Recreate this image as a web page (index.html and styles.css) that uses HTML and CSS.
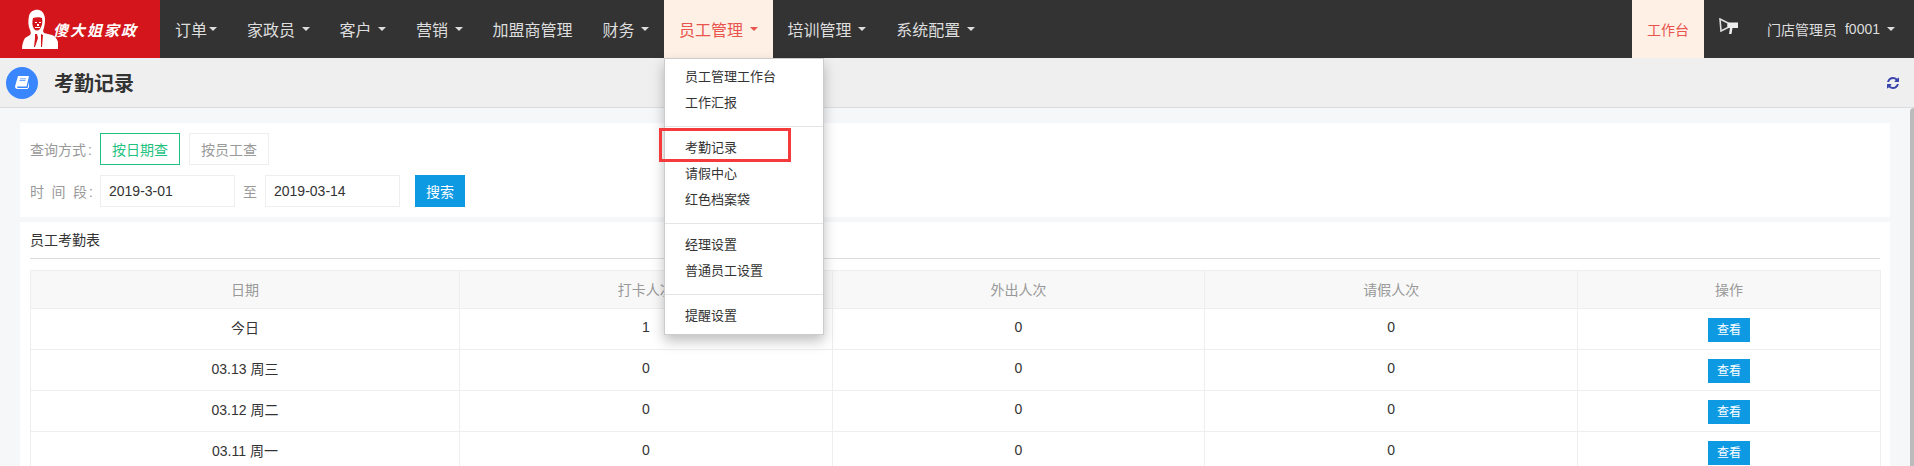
FILE: index.html
```html
<!DOCTYPE html>
<html lang="en">

<head>
    <meta charset="UTF-8">
    <meta name="viewport" content="width=device-width, initial-scale=1.0">
    <title>考勤记录</title>
    <link rel="stylesheet" href="styles.css">
</head>

<body>
    <header class="topbar">
        <a class="logo">
            <svg class="logo-figure" viewBox="0 0 36 40" width="36" height="40">
                <path fill="#fff" d="M7 7C8 2 13 0 17 1c4 1 6 5 6 10 0 4-1 8-2 11l1 2 8 2c3 1 5 4 6 7v7H0c0-4 1-8 3-11l5-3c1-1 1-3 0-5C6 17 6 12 7 7z"/>
                <path fill="#d4161c" d="M11 9c3-1 7-1 9 0 1 4 0 8-2 11-2 2-4 2-6 0-2-3-2-7-1-11z"/>
                <path fill="#fff" d="M13 13h2v1h-2zM17 13h2v1h-2zM15 15h2v2h-2zM13 18h5v1h-5z"/>
                <path fill="#d4161c" d="M13 25l2 0 1 4-3 9h-1l1-9zM19 25l2 1-1 12h-1z"/>
            </svg>
            <span class="logo-text">傻大姐家政</span>
        </a>
        <nav class="main-nav">
            <a class="nav-item nav-item-tight">订单<i class="caret"></i></a>
            <a class="nav-item">家政员<i class="caret"></i></a>
            <a class="nav-item">客户<i class="caret"></i></a>
            <a class="nav-item">营销<i class="caret"></i></a>
            <a class="nav-item">加盟商管理</a>
            <a class="nav-item">财务<i class="caret"></i></a>
            <div class="nav-item active">员工管理<i class="caret"></i>
                <ul class="dropdown">
                    <li>员工管理工作台</li>
                    <li>工作汇报</li>
                    <li class="divider"></li>
                    <li>考勤记录</li>
                    <li>请假中心</li>
                    <li>红色档案袋</li>
                    <li class="divider"></li>
                    <li>经理设置</li>
                    <li>普通员工设置</li>
                    <li class="divider"></li>
                    <li>提醒设置</li>
                    <span class="highlight"></span>
                </ul>
            </div>
            <a class="nav-item">培训管理<i class="caret"></i></a>
            <a class="nav-item">系统配置<i class="caret"></i></a>
        </nav>
        <div class="user-nav">
            <a class="nav-item active nav-small">工作台</a>
            <svg class="horn" viewBox="0 0 19 16" width="19" height="16">
                <path fill="none" stroke="#ddd" stroke-width="1.600" d="M1 1l8 4v4.500l-7 3.500z"/>
                <path fill="#eee" d="M9 4.500h10v5.500h-5.500l-1 6H10l1-6H9z"/>
            </svg>
            <a class="user-name">门店管理员<span class="user-id">f0001</span><i class="caret"></i></a>
        </div>
    </header>

    <div class="title-bar">
        <span class="title-icon">
            <svg viewBox="0 0 14 13" width="14" height="13">
                <path fill="#fff" d="M3 0h11l-2.500 10.500H3c-.8 0-1 .3-.9.800.1.300.5.600 1 .600h9.400L14 6v5l-1.300 2H2.500C1 13 .2 12 0 10.500z"/>
                <path fill="#3a86ff" d="M5 2.500h6l-.2.800H4.800zM4.600 4.300h6l-.2.800H4.400z"/>
            </svg>
        </span>
        <h1>考勤记录</h1>
        <svg class="refresh" viewBox="0 0 1792 1792" width="14" height="14">
            <path fill="#3a44ad" d="M1639 1056q0 5-1 7-64 268-268 434.500t-478 166.500q-146 0-282.500-55t-243.500-157l-129 129q-19 19-45 19t-45-19-19-45v-448q0-26 19-45t45-19h448q26 0 45 19t19 45-19 45l-137 137q71 66 161 102t187 36q134 0 250-65t186-179q11-17 53-117 8-23 30-23h192q13 0 22.500 9.500t9.500 22.500zm25-800v448q0 26-19 45t-45 19h-448q-26 0-45-19t-19-45 19-45l138-138q-148-137-349-137-134 0-250 65t-186 179q-11 17-53 117-8 23-30 23h-199q-13 0-22.500-9.500t-9.500-22.500v-7q65-268 270-434.500t480-166.500q146 0 284 55.500t245 156.500l130-129q19-19 45-19t45 19 19 45z"/>
        </svg>
    </div>

    <main class="content">
        <section class="card search-card">
            <div class="search-row">
                <label class="search-label">查询方式<span class="colon">:</span></label>
                <button class="tab tab-on">按日期查</button>
                <button class="tab">按员工查</button>
            </div>
            <div class="search-row">
                <label class="search-label"><span class="spaced">时间</span>段<span class="colon">:</span></label>
                <input class="date-input" type="text" value="2019-3-01">
                <span class="to">至</span>
                <input class="date-input" type="text" value="2019-03-14">
                <button class="btn-search">搜索</button>
            </div>
        </section>

        <section class="card table-card">
            <h2 class="table-title">员工考勤表</h2>
            <table class="record-table">
                <colgroup>
                    <col class="col-date">
                    <col class="col-num">
                    <col class="col-num">
                    <col class="col-num">
                    <col class="col-op">
                </colgroup>
                <thead>
                    <tr>
                        <th>日期</th>
                        <th>打卡人次</th>
                        <th>外出人次</th>
                        <th>请假人次</th>
                        <th>操作</th>
                    </tr>
                </thead>
                <tbody>
                    <tr>
                        <td>今日</td>
                        <td>1</td>
                        <td>0</td>
                        <td>0</td>
                        <td><a class="btn-view">查看</a></td>
                    </tr>
                    <tr>
                        <td>03.13 周三</td>
                        <td>0</td>
                        <td>0</td>
                        <td>0</td>
                        <td><a class="btn-view">查看</a></td>
                    </tr>
                    <tr>
                        <td>03.12 周二</td>
                        <td>0</td>
                        <td>0</td>
                        <td>0</td>
                        <td><a class="btn-view">查看</a></td>
                    </tr>
                    <tr>
                        <td>03.11 周一</td>
                        <td>0</td>
                        <td>0</td>
                        <td>0</td>
                        <td><a class="btn-view">查看</a></td>
                    </tr>
                </tbody>
            </table>
        </section>
    </main>

    <div class="scroll-thumb"></div>
</body>

</html>
```

FILE: styles.css
```css
* {
    box-sizing: border-box;
}

html, body {
    height: 466px;
    overflow: hidden;
}

body {
    margin: 0;
    position: relative;
    font-family: "Liberation Sans", "Noto Sans CJK SC", sans-serif;
    font-size: 14px;
    color: #333;
    background-color: #f6f7f9;
}

/* top bar */
.topbar {
    display: flex;
    height: 58px;
    background-color: #333;
    color: #ddd;
}

.logo {
    display: flex;
    align-items: center;
    width: 160px;
    padding-left: 22px;
    background-color: #d4161c;
}

.logo-text {
    margin-left: -5px;
    font-size: 15px;
    font-weight: 700;
    font-style: italic;
    letter-spacing: 2px;
    color: #fff;
    white-space: nowrap;
}

.main-nav {
    display: flex;
}

.nav-item {
    position: relative;
    display: flex;
    align-items: center;
    height: 58px;
    padding: 0 15px;
    font-size: 16px;
    color: #ddd;
}

.nav-item .caret {
    margin-left: 6.500px;
}

.nav-item-tight .caret {
    margin-left: 2px;
}

.caret {
    display: inline-block;
    width: 0;
    height: 0;
    border-top: 4px solid currentColor;
    border-left: 4px solid transparent;
    border-right: 4px solid transparent;
}

.nav-item.active {
    background-color: #fff0e5;
    color: #e8554e;
}

.nav-small {
    font-size: 14px;
}

.user-nav {
    display: flex;
    align-items: center;
    margin-left: auto;
    padding-right: 19px;
}

.horn {
    margin: -6px 0 0 15px;
}

.user-name {
    display: flex;
    align-items: center;
    margin-left: 29px;
    color: #ddd;
}

.user-id {
    margin-left: 8px;
}

.user-name .caret {
    margin-left: 7px;
}

/* dropdown */
.dropdown {
    position: absolute;
    top: 58px;
    left: 0;
    z-index: 10;
    width: 160px;
    margin: 0;
    padding: 5px 0;
    list-style: none;
    background-color: #fff;
    border: 1px solid #ccc;
    box-shadow: 0 6px 12px rgba(0, 0, 0, 0.25);
    font-size: 13px;
    color: #333;
}

.dropdown li {
    height: 26px;
    padding: 0 20px;
    line-height: 25px;
    white-space: nowrap;
}

.dropdown .divider {
    height: 1px;
    margin: 10px 0 8px;
    padding: 0;
    background-color: #e5e5e5;
}

.highlight {
    position: absolute;
    top: 69px;
    left: -6px;
    width: 132px;
    height: 34px;
    border: 3px solid #f43a3a;
}

/* title bar */
.title-bar {
    display: flex;
    align-items: center;
    height: 50px;
    padding: 0 14px 0 6px;
    background-color: #efefef;
    border-bottom: 1px solid #ddd;
}

.title-icon {
    display: flex;
    align-items: center;
    justify-content: center;
    width: 32px;
    height: 32px;
    border-radius: 50%;
    background-color: #3a86ff;
}

.title-bar h1 {
    margin: 0 0 0 16px;
    font-size: 20px;
    font-weight: 700;
    color: #333;
}

.refresh {
    margin-left: auto;
}

/* content */
.content {
    padding: 15px 24px 0 20px;
}

.card {
    background-color: #fff;
}

.search-card {
    height: 94px;
    padding: 10px 9px;
    margin-bottom: 5px;
}

.search-row {
    display: flex;
    align-items: center;
    height: 32px;
    margin-bottom: 10px;
}

.search-label {
    width: 71px;
    padding-left: 1px;
    color: #999;
}

.spaced {
    letter-spacing: 7.500px;
}

.colon {
    margin-left: 2px;
}

.tab {
    width: 80px;
    height: 32px;
    margin-right: 9px;
    padding: 0;
    border: 1px solid #eee;
    background-color: #fff;
    font-family: inherit;
    font-size: 14px;
    color: #999;
}

.tab-on {
    border-color: #1fc27f;
    color: #1fc27f;
}

.date-input {
    width: 135px;
    height: 32px;
    padding: 0 8px;
    border: 1px solid #eee;
    font-family: inherit;
    font-size: 14px;
    color: #333;
}

.to {
    width: 30px;
    text-align: center;
    color: #999;
}

.btn-search {
    width: 50px;
    height: 32px;
    margin-left: 15px;
    padding: 0;
    border: none;
    background-color: #0e9ae3;
    font-family: inherit;
    font-size: 14px;
    color: #fff;
}

.table-card {
    padding: 0 10px;
}

.table-title {
    height: 37px;
    margin: 0 0 11px;
    padding-top: 9px;
    line-height: 18px;
    border-bottom: 1px solid #ddd;
    font-size: 14px;
    font-weight: 400;
    color: #333;
}

.record-table {
    width: 1850px;
    table-layout: fixed;
    border-collapse: collapse;
    text-align: center;
}

.col-date {
    width: 429px;
}

.col-num {
    width: 372.670px;
}

.col-op {
    width: 303px;
}

.record-table th,
.record-table td {
    padding: 0;
    border: 1px solid #eee;
}

.record-table th {
    height: 38px;
    padding-bottom: 2px;
    background-color: #f8f8f8;
    font-weight: 400;
    color: #999;
}

.record-table td {
    height: 41px;
    padding-bottom: 4px;
}

.record-table td:last-child {
    padding-bottom: 0;
}

.btn-view {
    display: inline-block;
    width: 42px;
    height: 24px;
    margin-top: 1px;
    line-height: 24px;
    vertical-align: middle;
    background-color: #0e9ae3;
    font-size: 12px;
    color: #fff;
}

.scroll-thumb {
    position: absolute;
    top: 108px;
    right: 0;
    bottom: 0;
    width: 4px;
    border-top-left-radius: 4px;
    background-color: #bbb;
}
```
